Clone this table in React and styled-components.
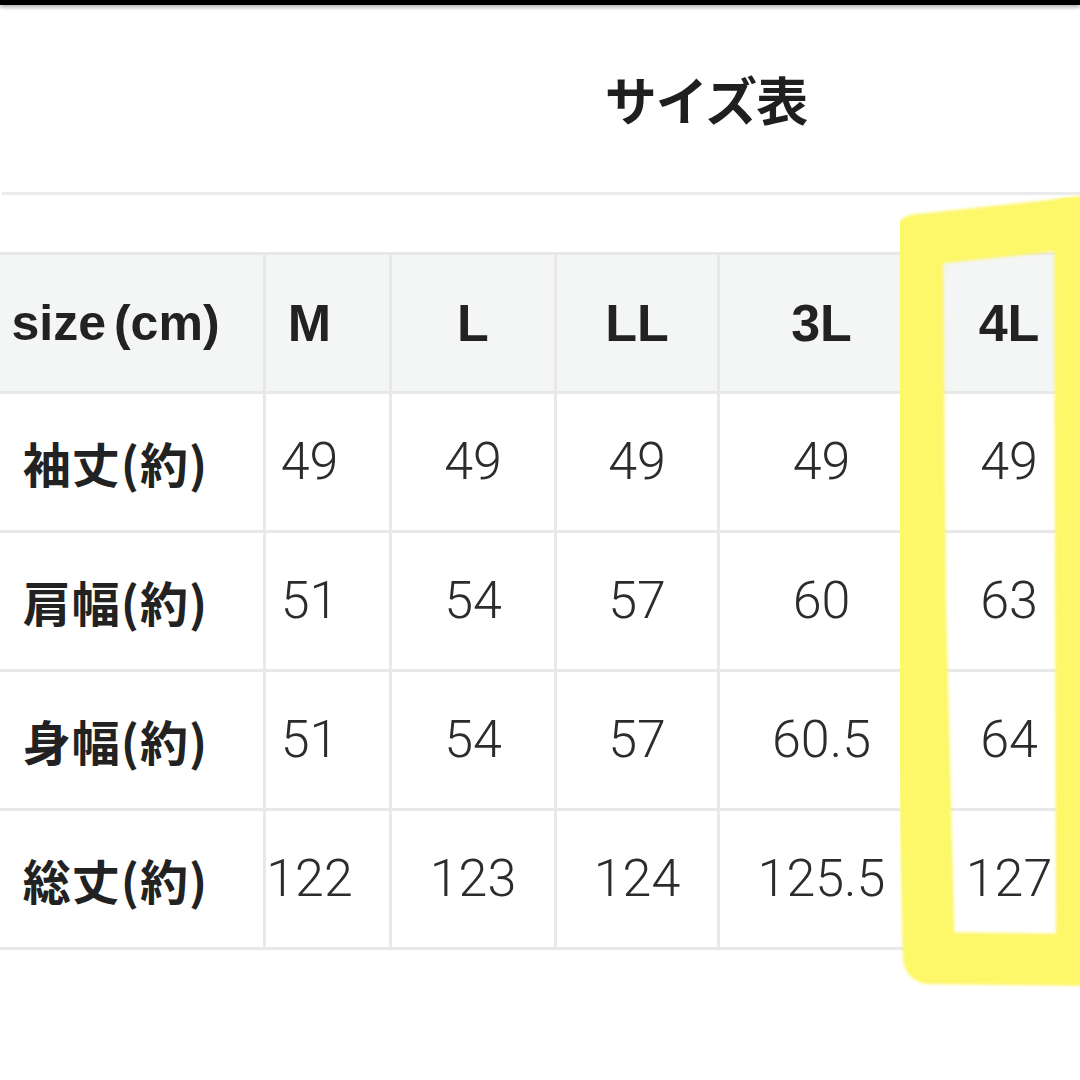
import React from 'react';
import styled, { createGlobalStyle } from 'styled-components';

const GlobalStyle = createGlobalStyle`
    html, body {
        margin: 0;
        padding: 0;
        background: #ffffff;
        overflow: hidden;
    }
    body {
        font-family: "Noto Sans CJK JP", "Noto Sans", sans-serif;
        color: #222;
    }
`;

const Page = styled.div`
    position: relative;
    width: 1080px;
    height: 1080px;
    overflow: hidden;
    background: #fff;
`;

const TopBar = styled.div`
    height: 5px;
    background: #000;
    box-shadow: 0 2px 4px rgba(0, 0, 0, 0.35);
`;

const TitleArea = styled.div`
    height: 187px;
    display: flex;
    align-items: center;
    justify-content: center;
    padding-left: 332px;
`;

const Title = styled.h1`
    margin: 0;
    font-size: 52px;
    font-weight: 700;
    line-height: 1;
    color: #1f1f1f;
    letter-spacing: -1px;
`;

const Divider = styled.div`
    height: 3px;
    margin-left: 2px;
    background: #ebebeb;
`;

const TableWrap = styled.div`
    margin-top: 57px;
    width: 1092px;
`;

const Grid = styled.div`
    display: grid;
    grid-template-columns: 263px 123px 162px 160px 203px 166px;
    grid-auto-rows: 136px;
    gap: 3px;
    padding: 3px 0;
    background: #e8e8e8;
`;

const Cell = styled.div`
    display: flex;
    align-items: center;
    justify-content: center;
    padding-right: ${props => props.$shift || 0}px;
    background: ${props => (props.$head ? '#f4f5f5' : '#ffffff')};
    white-space: nowrap;
    line-height: 1;
`;

const Label = styled.span`
    font-family: "Noto Sans CJK JP", sans-serif;
    font-size: 48px;
    font-weight: 700;
    color: #222;
    letter-spacing: 1px;
`;

const SizeLabel = styled.span`
    font-family: "Liberation Sans", Arial, sans-serif;
    font-size: 50px;
    font-weight: 700;
    color: #222;

    span {
        margin-left: 8px;
    }
`;

const SizeName = styled.span`
    font-family: "Liberation Sans", Arial, sans-serif;
    font-size: 52px;
    font-weight: 700;
    color: #222;
`;

const Value = styled.span`
    font-family: Roboto, "Liberation Sans", sans-serif;
    font-size: 52px;
    font-weight: 300;
    color: #2c2c2c;
`;

const Highlight = styled.svg`
    position: absolute;
    left: 0;
    top: 0;
    pointer-events: none;
`;

const sizes = ['M', 'L', 'LL', '3L', '4L'];

const rows = [
    { label: '袖丈(約)', values: ['49', '49', '49', '49', '49'] },
    { label: '肩幅(約)', values: ['51', '54', '57', '60', '63'] },
    { label: '身幅(約)', values: ['51', '54', '57', '60.5', '64'] },
    { label: '総丈(約)', values: ['122', '123', '124', '125.5', '127'] },
];

const shifts = [32, 36, 0, 0, 0, 0];

const App = () => {
    return (
        <Page>
            <GlobalStyle />
            <TopBar />
            <TitleArea>
                <Title>サイズ表</Title>
            </TitleArea>
            <Divider />
            <TableWrap>
                <Grid>
                    <Cell $head $shift={shifts[0]}>
                        <SizeLabel>size<span>(cm)</span></SizeLabel>
                    </Cell>
                    {sizes.map((s, i) => (
                        <Cell key={s} $head $shift={shifts[i + 1]}>
                            <SizeName>{s}</SizeName>
                        </Cell>
                    ))}
                    {rows.map(row => (
                        <React.Fragment key={row.label}>
                            <Cell $shift={shifts[0]}>
                                <Label>{row.label}</Label>
                            </Cell>
                            {row.values.map((v, i) => (
                                <Cell key={i} $shift={shifts[i + 1]}>
                                    <Value>{v}</Value>
                                </Cell>
                            ))}
                        </React.Fragment>
                    ))}
                </Grid>
            </TableWrap>
            <Highlight width="1080" height="1080" viewBox="0 0 1080 1080">
                <defs>
                    <filter id="soft">
                        <feGaussianBlur stdDeviation="1.5" />
                    </filter>
                </defs>
                <path
                    d="M 1080 222 L 1050 226 L 917 240 L 920 600 L 929 958 L 1082 960 L 1080 222"
                    fill="none"
                    stroke="#fdf76b"
                    strokeWidth="52"
                    strokeLinejoin="round"
                    strokeLinecap="round"
                    filter="url(#soft)"
                />
                <path
                    d="M 1062 215 L 1070 200"
                    fill="none"
                    stroke="#fdf76b"
                    strokeWidth="40"
                    strokeLinecap="round"
                    filter="url(#soft)"
                />
            </Highlight>
        </Page>
    );
};

export default App;
